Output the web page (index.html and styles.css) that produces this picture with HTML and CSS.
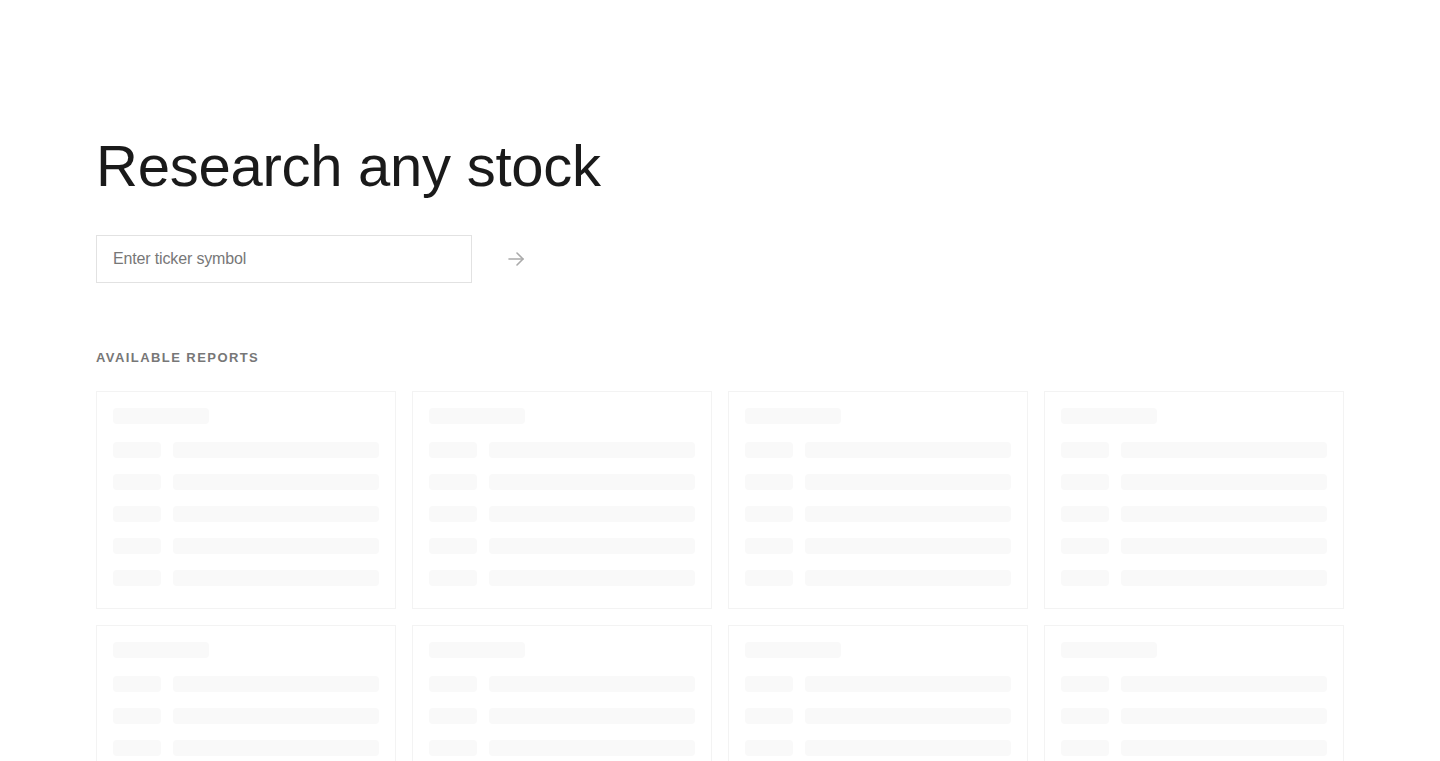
FILE: index.html
```html
<!DOCTYPE html>
<html lang="en">
<head>
    <meta charset="UTF-8">
    <meta name="viewport" content="width=device-width, initial-scale=1.0">
    <title>Research any stock</title>
    <link rel="stylesheet" href="styles.css">
</head>
<body>
    <main class="container">
        <h1>Research any stock</h1>
        <form class="search" onsubmit="return false;">
            <input type="text" class="search-input" placeholder="Enter ticker symbol">
            <button type="submit" class="search-btn" aria-label="Search">
                <svg width="20" height="20" viewBox="0 0 20 20" fill="none" stroke="currentColor" stroke-width="1.6" stroke-linecap="round" stroke-linejoin="round">
                    <path d="M3 10h14"/>
                    <path d="M11 4l6 6-6 6"/>
                </svg>
            </button>
        </form>

        <h2 class="section-title">Available Reports</h2>
        <div class="reports">
            <div class="card"><div class="sk-title"></div><div class="sk-row"><span class="sk-label"></span><span class="sk-value"></span></div><div class="sk-row"><span class="sk-label"></span><span class="sk-value"></span></div><div class="sk-row"><span class="sk-label"></span><span class="sk-value"></span></div><div class="sk-row"><span class="sk-label"></span><span class="sk-value"></span></div><div class="sk-row"><span class="sk-label"></span><span class="sk-value"></span></div></div>
            <div class="card"><div class="sk-title"></div><div class="sk-row"><span class="sk-label"></span><span class="sk-value"></span></div><div class="sk-row"><span class="sk-label"></span><span class="sk-value"></span></div><div class="sk-row"><span class="sk-label"></span><span class="sk-value"></span></div><div class="sk-row"><span class="sk-label"></span><span class="sk-value"></span></div><div class="sk-row"><span class="sk-label"></span><span class="sk-value"></span></div></div>
            <div class="card"><div class="sk-title"></div><div class="sk-row"><span class="sk-label"></span><span class="sk-value"></span></div><div class="sk-row"><span class="sk-label"></span><span class="sk-value"></span></div><div class="sk-row"><span class="sk-label"></span><span class="sk-value"></span></div><div class="sk-row"><span class="sk-label"></span><span class="sk-value"></span></div><div class="sk-row"><span class="sk-label"></span><span class="sk-value"></span></div></div>
            <div class="card"><div class="sk-title"></div><div class="sk-row"><span class="sk-label"></span><span class="sk-value"></span></div><div class="sk-row"><span class="sk-label"></span><span class="sk-value"></span></div><div class="sk-row"><span class="sk-label"></span><span class="sk-value"></span></div><div class="sk-row"><span class="sk-label"></span><span class="sk-value"></span></div><div class="sk-row"><span class="sk-label"></span><span class="sk-value"></span></div></div>
            <div class="card"><div class="sk-title"></div><div class="sk-row"><span class="sk-label"></span><span class="sk-value"></span></div><div class="sk-row"><span class="sk-label"></span><span class="sk-value"></span></div><div class="sk-row"><span class="sk-label"></span><span class="sk-value"></span></div><div class="sk-row"><span class="sk-label"></span><span class="sk-value"></span></div><div class="sk-row"><span class="sk-label"></span><span class="sk-value"></span></div></div>
            <div class="card"><div class="sk-title"></div><div class="sk-row"><span class="sk-label"></span><span class="sk-value"></span></div><div class="sk-row"><span class="sk-label"></span><span class="sk-value"></span></div><div class="sk-row"><span class="sk-label"></span><span class="sk-value"></span></div><div class="sk-row"><span class="sk-label"></span><span class="sk-value"></span></div><div class="sk-row"><span class="sk-label"></span><span class="sk-value"></span></div></div>
            <div class="card"><div class="sk-title"></div><div class="sk-row"><span class="sk-label"></span><span class="sk-value"></span></div><div class="sk-row"><span class="sk-label"></span><span class="sk-value"></span></div><div class="sk-row"><span class="sk-label"></span><span class="sk-value"></span></div><div class="sk-row"><span class="sk-label"></span><span class="sk-value"></span></div><div class="sk-row"><span class="sk-label"></span><span class="sk-value"></span></div></div>
            <div class="card"><div class="sk-title"></div><div class="sk-row"><span class="sk-label"></span><span class="sk-value"></span></div><div class="sk-row"><span class="sk-label"></span><span class="sk-value"></span></div><div class="sk-row"><span class="sk-label"></span><span class="sk-value"></span></div><div class="sk-row"><span class="sk-label"></span><span class="sk-value"></span></div><div class="sk-row"><span class="sk-label"></span><span class="sk-value"></span></div></div>
        </div>
    </main>
</body>
</html>
```

FILE: styles.css
```css
* {
    box-sizing: border-box;
}
body {
    margin: 0;
    font-family: "Liberation Sans", Arial, sans-serif;
    color: #1a1a1a;
    background: #fff;
}
.container {
    padding: 130px 96px 48px;
}
h1 {
    margin: 0;
    font-size: 58px;
    font-weight: 400;
    line-height: 72px;
    letter-spacing: -0.25px;
    color: #1a1a1a;
}
.search {
    display: flex;
    align-items: center;
    margin-top: 33px;
}
.search-input {
    width: 376px;
    height: 48px;
    padding: 0 16px;
    border: 1px solid #e2e2e2;
    border-radius: 0;
    font-family: inherit;
    font-size: 16px;
    letter-spacing: -0.15px;
    color: #1a1a1a;
    outline: none;
}
.search-input::placeholder {
    color: #777;
}
.search-btn {
    display: flex;
    align-items: center;
    justify-content: center;
    width: 48px;
    height: 48px;
    margin-left: 20px;
    padding: 0;
    border: none;
    background: none;
    color: #aaa;
    cursor: pointer;
}
.section-title {
    margin: 67px 0 25px;
    font-size: 13px;
    font-weight: 700;
    line-height: 16px;
    letter-spacing: 0.11em;
    text-transform: uppercase;
    color: #777;
}
.reports {
    display: grid;
    grid-template-columns: repeat(4, 1fr);
    gap: 16px;
}
.card {
    border: 1px solid #f3f3f3;
    padding: 16px 16px 22px;
}
.sk-title,
.sk-label,
.sk-value {
    display: block;
    height: 16px;
    border-radius: 4px;
    background: #f9f9f9;
}
.sk-title {
    width: 96px;
    margin-bottom: 18px;
}
.sk-row {
    display: flex;
    gap: 12px;
    margin-bottom: 16px;
}
.sk-row:last-child {
    margin-bottom: 0;
}
.sk-label {
    width: 48px;
}
.sk-value {
    flex: 1;
}
```
